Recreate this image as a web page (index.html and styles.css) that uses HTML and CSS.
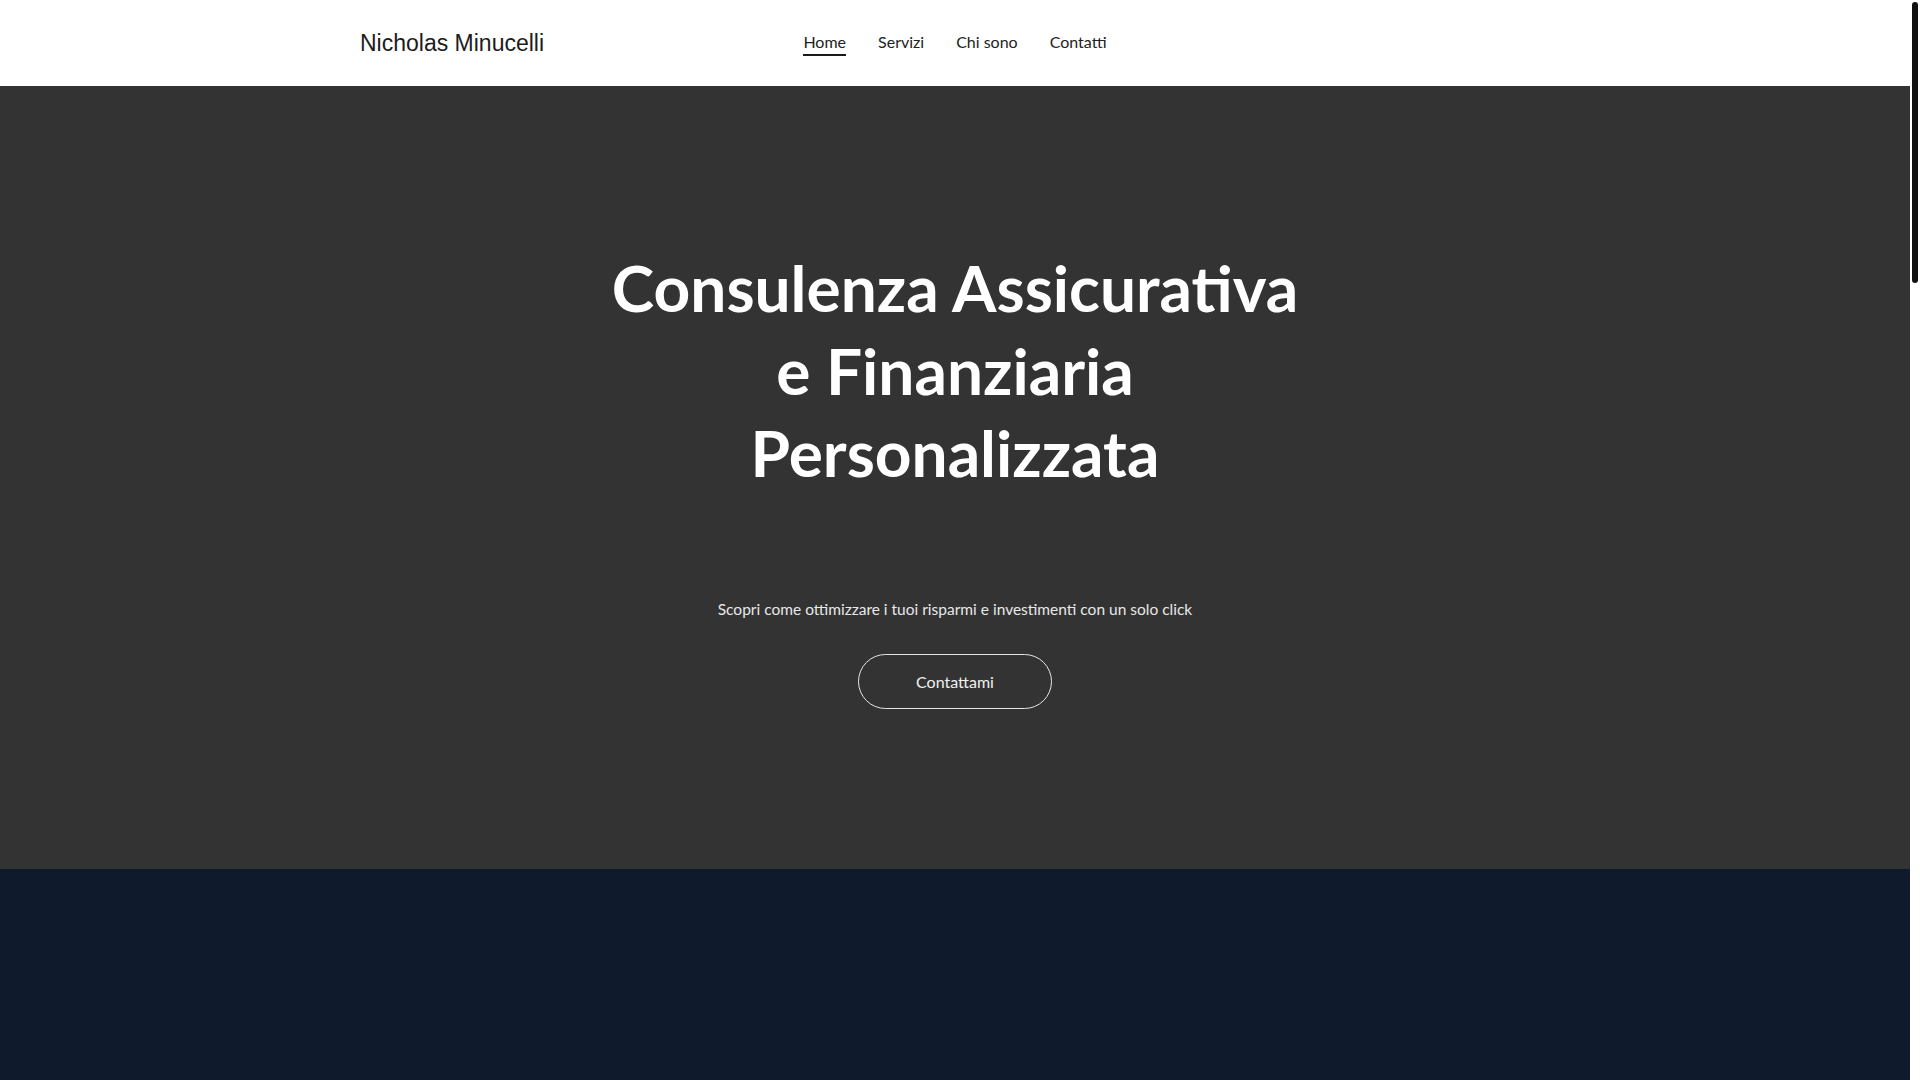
FILE: index.html
```html
<!DOCTYPE html>
<html lang="it">
<head>
<meta charset="utf-8">
<title>Nicholas Minucelli</title>
<link rel="stylesheet" href="styles.css">
</head>
<body>
<div class="page">
  <header class="site-header">
    <div class="header-inner">
      <a class="brand" href="#">Nicholas Minucelli</a>
      <nav class="main-nav">
        <a class="nav-link active" href="#">Home</a>
        <a class="nav-link" href="#">Servizi</a>
        <a class="nav-link" href="#">Chi sono</a>
        <a class="nav-link" href="#">Contatti</a>
      </nav>
      <div class="header-spacer"></div>
    </div>
  </header>
  <main>
    <section class="hero">
      <h1 class="hero-title">Consulenza Assicurativa e Finanziaria Personalizzata</h1>
      <p class="hero-sub">Scopri come ottimizzare i tuoi risparmi e investimenti con un solo click</p>
      <a class="hero-btn" href="#">Contattami</a>
    </section>
    <section class="next-section"></section>
  </main>
</div>
<div class="scrollbar" aria-hidden="true"><div class="scrollbar-thumb"></div></div>
</body>
</html>
```

FILE: styles.css
```css
html, body {
  margin: 0;
  padding: 0;
}

body {
  font-family: Lato, "Open Sans", sans-serif;
  background: #ffffff;
}

::-webkit-scrollbar {
  display: none;
}

a {
  text-decoration: none;
}

.page {
  margin-right: 10px;
}

.scrollbar {
  position: fixed;
  top: 0;
  right: 0;
  width: 10px;
  height: 100vh;
  background: #ffffff;
}

.scrollbar-thumb {
  margin: 2px 2px 0 2px;
  height: 281px;
  background: #111111;
  border-radius: 3px;
}

.site-header {
  background: #ffffff;
  height: 86px;
}

.header-inner {
  max-width: 1190px;
  height: 100%;
  margin: 0 auto;
  display: grid;
  grid-template-columns: 1fr auto 1fr;
  align-items: center;
}

.brand {
  font-family: "Liberation Sans", Arial, sans-serif;
  font-size: 23px;
  color: #1c1c1c;
  justify-self: start;
}

.main-nav {
  display: flex;
  gap: 32px;
}

.nav-link {
  font-size: 16px;
  color: #222222;
  line-height: 21px;
  padding: 1px 0 2px;
  border-bottom: 2px solid transparent;
}

.nav-link.active {
  border-bottom-color: #1a1a1a;
}

.hero {
  background: #333333;
  padding: 161px 20px 160px;
  display: flex;
  flex-direction: column;
  align-items: center;
  text-align: center;
}

.hero-title {
  margin: 0;
  max-width: 700px;
  color: #ffffff;
  font-weight: 700;
  font-size: 64px;
  line-height: 82.5px;
}

.hero-sub {
  margin: 102px 0 0;
  font-size: 15.5px;
  line-height: 24px;
  color: #e8e8e8;
}

.hero-btn {
  margin-top: 33px;
  box-sizing: border-box;
  height: 55px;
  padding: 0 57px;
  display: flex;
  align-items: center;
  border: 1px solid #e6e6e6;
  border-radius: 28px;
  color: #f0f0f0;
  font-size: 16px;
}

.next-section {
  background: #0f1b2c;
  min-height: 3280px;
}
```
